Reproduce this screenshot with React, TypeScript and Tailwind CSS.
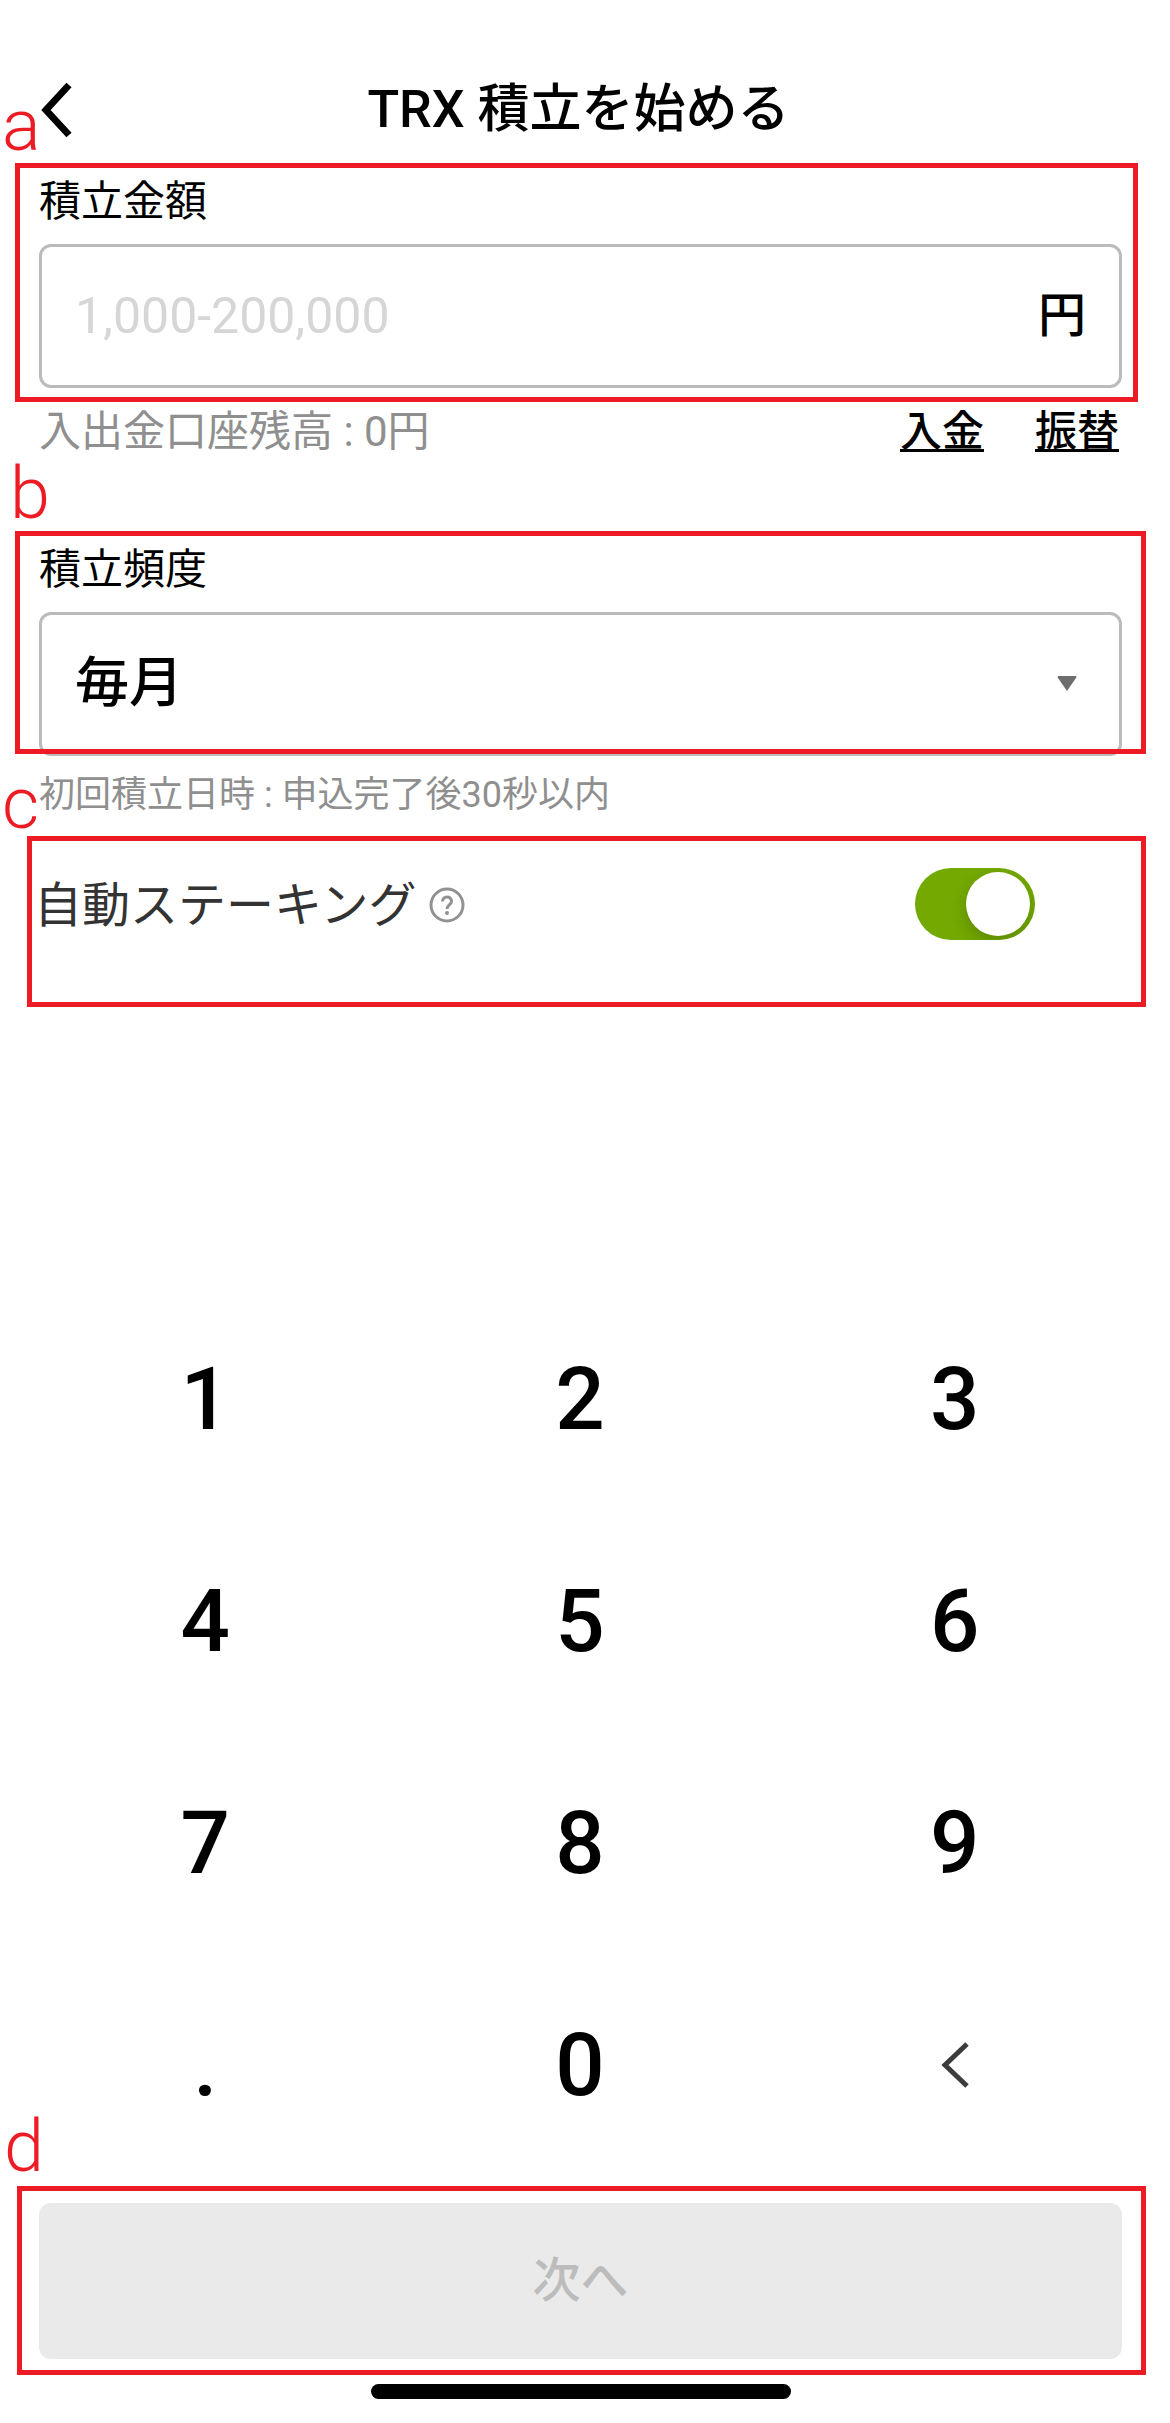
import { useState } from "react";

const keys = ["1", "2", "3", "4", "5", "6", "7", "8", "9", ".", "0"];

function Callout({ letter, box, label }: { letter: string; box: string; label: string }) {
  return (
    <>
      <div className={`absolute border-5 border-[#ed1c24] pointer-events-none ${box}`} />
      <span
        className={`absolute text-[72px] leading-[72px] font-light text-[#ed1c24] pointer-events-none ${label}`}
      >
        {letter}
      </span>
    </>
  );
}

export default function App() {
  const [amount, setAmount] = useState("");
  const [staking, setStaking] = useState(true);

  return (
    <main
      lang="ja"
      className="min-h-screen flex flex-col bg-white text-black pr-[9px] overflow-hidden font-['Roboto','Noto_Sans_CJK_JP',sans-serif]"
    >
      <header className="grid grid-cols-[1fr_auto_1fr] items-center h-[88px] mt-[66px] mb-4 pl-[39px] pr-[43px]">
        <button type="button" aria-label="戻る" className="justify-self-start">
          <svg width="36" height="56" viewBox="0 0 36 56" fill="none" className="block">
            <path d="M30 3 L7 28 L30 53" stroke="#000" strokeWidth="7" />
          </svg>
        </button>
        <h1 className="text-[52px] leading-[60px] font-medium">TRX 積立を始める</h1>
      </header>

      <section className="relative px-[39px]">
        <label htmlFor="amount" className="block text-[42px] leading-[64px]">
          積立金額
        </label>
        <div className="flex items-center h-36 mt-[10px] px-[33px] border-3 border-[#bbb] rounded-xl">
          <input
            id="amount"
            inputMode="numeric"
            placeholder="1,000-200,000"
            value={amount}
            onChange={(e) => setAmount(e.target.value)}
            className="flex-1 min-w-0 text-[50px] leading-[60px] outline-none placeholder:text-[#d6d6d6]"
          />
          <span className="text-[48px] leading-[60px] font-medium">円</span>
        </div>
        <div className="flex justify-between items-start mt-3 h-[60px] text-[42px] leading-[64px]">
          <p className="text-[#8f8f8f]">入出金口座残高 : 0円</p>
          <nav className="flex gap-[51px] pr-[3px] font-medium">
            <a href="#deposit" className="h-[52px] border-b-3 border-black">
              入金
            </a>
            <a href="#transfer" className="h-[52px] border-b-3 border-black">
              振替
            </a>
          </nav>
        </div>
        <Callout
          letter="a"
          box="left-[15px] right-[23px] -top-[7px] h-[239px]"
          label="left-[2px] -top-[80px]"
        />
      </section>

      <section className="relative px-[39px] mt-[78px]">
        <label htmlFor="frequency" className="block text-[42px] leading-[64px]">
          積立頻度
        </label>
        <div className="relative mt-[10px]">
          <select
            id="frequency"
            className="block w-full h-36 px-[33px] border-3 border-[#bbb] rounded-xl appearance-none bg-white text-[54px] leading-[60px] font-medium"
          >
            <option>毎月</option>
            <option>毎週</option>
            <option>毎日</option>
          </select>
          <svg
            width="20"
            height="15"
            viewBox="0 0 20 15"
            className="absolute right-[45px] top-[64px] pointer-events-none"
          >
            <path d="M1 0 H19 Q20 1 19 2 L10 15 L1 2 Q0 1 1 0 Z" fill="#6e6e6e" />
          </svg>
        </div>
        <p className="mt-3 text-[36px] leading-[54px] text-[#8f8f8f]">
          初回積立日時 : 申込完了後30秒以内
        </p>
        <Callout
          letter="b"
          box="left-[15px] right-[15px] -top-[7px] h-[223px]"
          label="left-[10px] -top-[80px]"
        />
      </section>

      <section className="relative flex items-center h-[72px] mt-[46px] pl-[34px] pr-[126px]">
        <label htmlFor="staking" className="pt-1 text-[48px] leading-[60px] text-[#333]">
          自動ステーキング
        </label>
        <button type="button" aria-label="自動ステーキングとは" className="ml-3">
          <svg width="36" height="38" viewBox="0 0 36 38" fill="none" className="block">
            <circle cx="18" cy="20" r="16" stroke="#929292" strokeWidth="3" />
            <path
              d="M13.5 16.5 C13.5 10.5 22.5 10.5 22.5 16.2 C22.5 19.6 18 19.6 18 24"
              stroke="#929292"
              strokeWidth="3"
            />
            <circle cx="18" cy="28" r="2" fill="#929292" />
          </svg>
        </button>
        <input
          id="staking"
          type="checkbox"
          role="switch"
          checked={staking}
          onChange={(e) => setStaking(e.target.checked)}
          className="ml-auto appearance-none flex items-center w-[120px] h-[72px] p-[5px] rounded-full overflow-hidden bg-gray-300 checked:bg-[#73a900] checked:justify-end before:size-16 before:rounded-full before:bg-white before:shadow-[0_6px_16px_rgba(0,0,0,0.2)]"
        />
        <Callout
          letter="c"
          box="left-[27px] right-[15px] -top-8 h-[171px]"
          label="left-[2px] -top-[100px]"
        />
      </section>

      <section className="grid grid-cols-3 mt-auto pl-[18px] pr-[19px] text-[87px] font-medium">
        {keys.map((key) => (
          <button
            key={key}
            type="button"
            onClick={() => setAmount(amount + key)}
            className="h-[222px] pt-1 leading-[218px]"
          >
            {key}
          </button>
        ))}
        <button
          type="button"
          aria-label="削除"
          onClick={() => setAmount(amount.slice(0, -1))}
          className="h-[222px] pt-1 flex items-center justify-center"
        >
          <svg width="28" height="46" viewBox="0 0 28 46" fill="none">
            <path d="M26 2 L4 23 L26 44" stroke="#3c3c3c" strokeWidth="5" />
          </svg>
        </button>
      </section>

      <section className="relative px-[39px] mt-[29px]">
        <button
          type="button"
          disabled
          className="block w-full h-[156px] rounded-xl bg-[#eaeaea] text-[48px] font-medium text-[#bcbcbc]"
        >
          次へ
        </button>
        <Callout
          letter="d"
          box="left-[17px] right-[15px] -top-[17px] h-[189px]"
          label="left-[4px] -top-[92px]"
        />
      </section>

      <div className="w-[420px] h-[15px] mt-[25px] mb-6 mx-auto rounded-full bg-black" />
    </main>
  );
}
